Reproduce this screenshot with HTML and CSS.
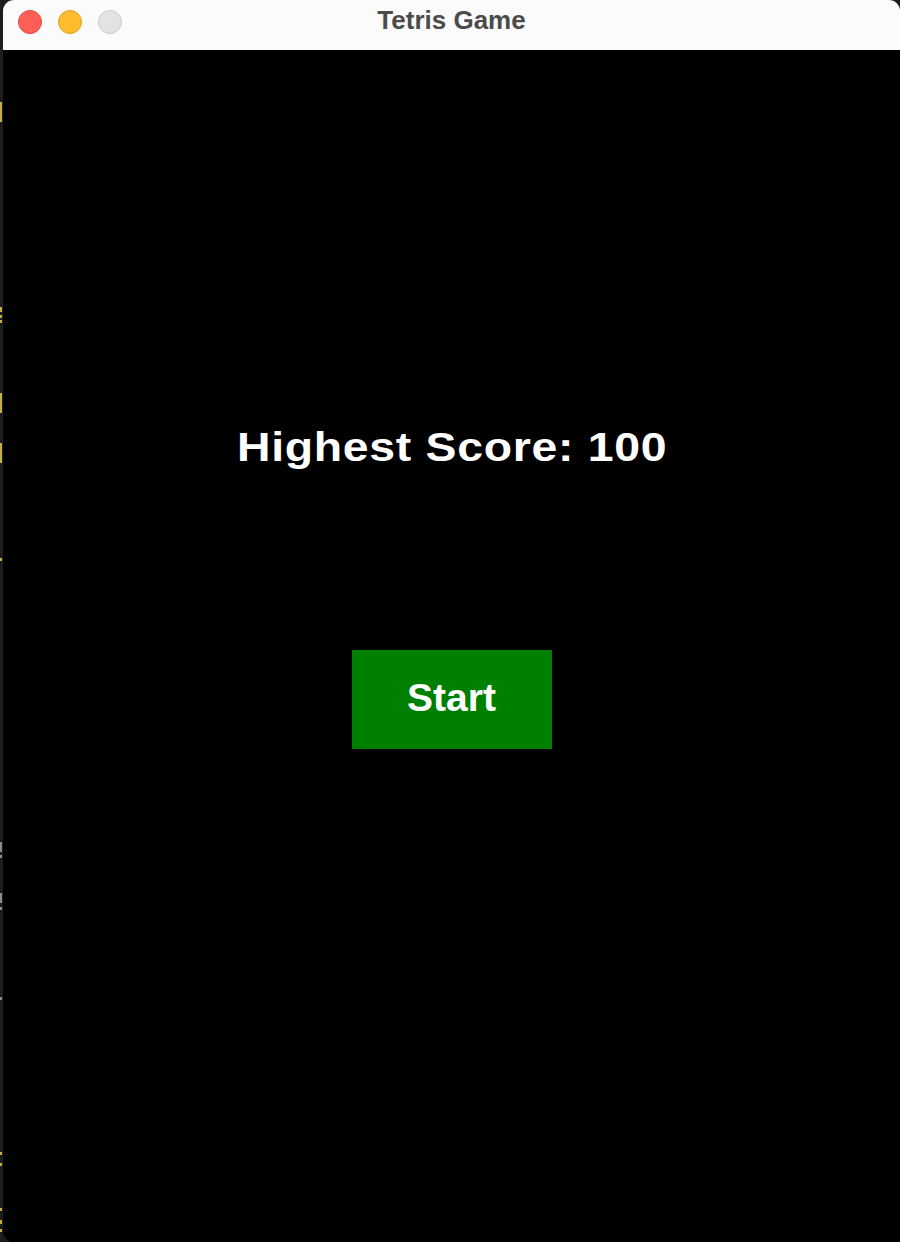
FILE: index.html
```html
<!DOCTYPE html>
<html lang="en">
<head>
<meta charset="utf-8">
<title>Tetris Game</title>
<link rel="stylesheet" href="styles.css">
</head>
<body>
<div class="desktop">
  <div class="strip">
    <span class="mark y" style="top:102px;height:20px"></span>
    <span class="mark y" style="top:307px;height:5px"></span>
    <span class="mark y" style="top:315px;height:3px"></span>
    <span class="mark y" style="top:320px;height:3px"></span>
    <span class="mark y" style="top:393px;height:20px"></span>
    <span class="mark y" style="top:443px;height:20px"></span>
    <span class="mark y" style="top:558px;height:3px"></span>
    <span class="mark g" style="top:842px;height:10px"></span>
    <span class="mark g" style="top:855px;height:3px"></span>
    <span class="mark g" style="top:893px;height:10px"></span>
    <span class="mark g" style="top:907px;height:3px"></span>
    <span class="mark g" style="top:997px;height:3px"></span>
    <span class="mark y" style="top:1152px;height:3px"></span>
    <span class="mark y" style="top:1163px;height:3px"></span>
    <span class="mark y" style="top:1208px;height:3px"></span>
    <span class="mark y" style="top:1220px;height:4px"></span>
    <span class="mark y" style="top:1229px;height:3px"></span>
  </div>
  <div class="window">
    <div class="titlebar">
      <div class="lights">
        <span class="light red"></span>
        <span class="light yellow"></span>
        <span class="light grey"></span>
      </div>
      <div class="title">Tetris Game</div>
      <div></div>
    </div>
    <div class="content">
      <div class="score">Highest Score: 100</div>
      <button class="start">Start</button>
    </div>
  </div>
</div>
</body>
</html>
```

FILE: styles.css
```css
html, body {
  margin: 0;
  padding: 0;
  background: #1b1c20;
  height: 100%;
  overflow: hidden;
}

.desktop {
  display: flex;
  height: 1242px;
}

.strip {
  position: relative;
  width: 3px;
  flex: none;
  background: #1b1c20;
}

.mark {
  position: absolute;
  left: 0;
  width: 2px;
}

.mark.y { background: #c9ad3c; }
.mark.g { background: #8a8b90; }

.window {
  flex: 1;
  display: flex;
  flex-direction: column;
  border-radius: 11px 11px 0 11px;
  overflow: hidden;
  background: #000;
}

.titlebar {
  height: 50px;
  flex: none;
  background: #fbfbfb;
  display: grid;
  grid-template-columns: 1fr auto 1fr;
  box-sizing: border-box;
}

.lights {
  display: flex;
  gap: 16px;
  padding: 10px 0 0 15px;
}

.light {
  width: 24px;
  height: 24px;
  border-radius: 50%;
  box-sizing: border-box;
}

.light.red { background: #ff5f57; border: 1px solid #e2463f; }
.light.yellow { background: #febc2e; border: 1px solid #dea123; }
.light.grey { background: #e3e3e3; border: 1px solid #c9c9c9; }

.title {
  font-family: "Liberation Sans", Arial, sans-serif;
  font-weight: bold;
  font-size: 26px;
  line-height: 26px;
  color: #4b4b4b;
  padding-top: 7px;
}

.content {
  flex: 1;
  background: #000;
  display: flex;
  flex-direction: column;
  align-items: center;
  padding-top: 373px;
}

.score {
  font-family: "Liberation Sans", Arial, sans-serif;
  font-weight: bold;
  font-size: 40px;
  line-height: 48px;
  letter-spacing: 0.6px;
  padding-left: 0.6px;
  transform: scaleX(1.16);
  color: #fff;
}

.start {
  margin-top: 179px;
  width: 200px;
  height: 99px;
  border: none;
  border-radius: 0;
  background: #008000;
  color: #fff;
  font-family: "Liberation Sans", Arial, sans-serif;
  font-weight: bold;
  font-size: 39px;
  line-height: 39px;
  padding: 0 0 4px 0;
  display: flex;
  align-items: center;
  justify-content: center;
}
```
